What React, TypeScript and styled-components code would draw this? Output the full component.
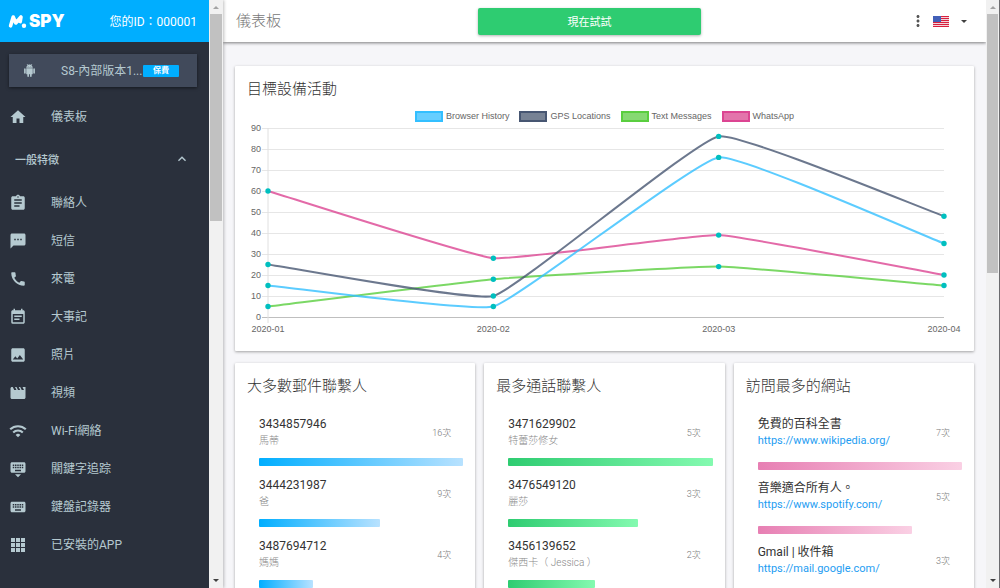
import React, { useEffect, useRef, useState } from "react";
import styled, { createGlobalStyle } from "styled-components";
import {
  MdAssignment,
  MdCall,
  MdEventNote,
  MdHome,
  MdImage,
  MdKeyboard,
  MdKeyboardArrowUp,
  MdKeyboardHide,
  MdMoreVert,
  MdMovie,
  MdTextsms,
} from "react-icons/md";

const GlobalStyle = createGlobalStyle`
  *, *::before, *::after { box-sizing: border-box; }
  body {
    margin: 0;
    font-family: Roboto, "Noto Sans CJK TC", sans-serif;
    font-size: 12px;
    color: #333;
    background: #f6f6f9;
  }
  h1, h2, p, ul { margin: 0; padding: 0; font-weight: 400; }
  ul { list-style: none; }
  a { text-decoration: none; color: inherit; }
  button { border: 0; font: inherit; cursor: pointer; }
`;

const Shell = styled.div`
  display: flex;
  height: 100vh;
  border-right: 1px solid #6b6b6e;
`;

const SidebarFrame = styled.aside`
  display: flex;
  flex: none;
  z-index: 2;
  box-shadow: 1px 0 3px rgba(0, 0, 0, 0.25);
`;

const Sidebar = styled.div`
  width: 209px;
  overflow: hidden;
  background: #2a303c;
  color: #b5c9d0;
`;

const Brand = styled.div`
  display: flex;
  align-items: center;
  justify-content: space-between;
  height: 42px;
  padding: 0 12px 2px 8px;
  background: #00aeff;
  color: #fff;
`;

const Logo = styled.a`
  display: flex;
  align-items: center;
  gap: 2px;
  padding-top: 2px;
  font: 900 17px/20px Inter, sans-serif;
`;

const DeviceButton = styled.button`
  display: flex;
  align-items: center;
  width: calc(100% - 21px);
  height: 33px;
  margin: 12px 12px 10px 9px;
  padding: 0 18px 0 14px;
  background: #414a5b;
  color: #b5c9d0;
  box-shadow: 0 1px 3px rgba(0, 0, 0, 0.5);
`;

const DeviceName = styled.span`
  flex: 1;
  margin-left: 25px;
  padding-bottom: 2px;
  text-align: left;
  white-space: nowrap;
`;

const Tag = styled.span`
  width: 36px;
  border-radius: 1px;
  background: #00aeff;
  color: #fff;
  font-size: 8px;
  font-weight: 700;
  line-height: 12px;
  text-align: center;
`;

const NavItem = styled.a`
  display: flex;
  align-items: center;
  gap: 24px;
  height: 38px;
  padding: 0 0 2px 9px;

  svg {
    margin-top: 3px;
  }
`;

const GroupToggle = styled.button`
  display: flex;
  align-items: center;
  justify-content: space-between;
  width: 100%;
  height: 48px;
  padding: 0 19px 0 15px;
  background: none;
  color: inherit;
  font-size: 11px;
  font-weight: 500;
`;

const Track = styled.div<{ $width: number }>`
  display: flex;
  flex: none;
  flex-direction: column;
  align-items: center;
  width: ${(p) => p.$width}px;
  padding: 6px 0;
  background: #f1f1f1;
`;

const Thumb = styled.div<{ $share: number }>`
  width: calc(100% - 2px);
  height: ${(p) => p.$share}%;
  margin: 5px 0 auto;
  background: #c1c1c1;
`;

const Arrow = styled.div<{ $up?: boolean }>`
  border: 3px solid transparent;
  border-top-width: ${(p) => (p.$up ? 0 : 3)}px;
  border-bottom-width: ${(p) => (p.$up ? 3 : 0)}px;
  border-top-color: #404040;
  border-bottom-color: #a3a3a3;
`;

const Page = styled.div`
  display: flex;
  flex: 1;
  flex-direction: column;
  min-width: 0;
  overflow: hidden;
`;

const TopBar = styled.header`
  display: grid;
  grid-template-columns: 9fr 223px 10fr;
  align-items: center;
  flex: none;
  height: 42px;
  padding: 0 16px 0 13px;
  background: #fff;
  box-shadow: 0 1px 3px rgba(0, 0, 0, 0.5);
`;

const PageTitle = styled.h1`
  padding-bottom: 1px;
  color: #777;
  font-size: 15px;
  font-weight: 300;
  line-height: 20px;
`;

const TryButton = styled.button`
  height: 27px;
  padding-bottom: 2px;
  border-radius: 2px;
  background: #2ecc71;
  color: #fff;
  font-size: 11px;
  box-shadow: 0 1px 3px rgba(0, 0, 0, 0.3);
`;

const TopActions = styled.div`
  display: flex;
  align-items: center;
  justify-content: flex-end;
`;

const IconButton = styled.button`
  display: flex;
  align-items: center;
  gap: 12px;
  padding: 0 3px;
  background: none;
  color: #555;
`;

const Content = styled.main`
  flex: 1;
  min-height: 0;
  overflow-y: auto;
  scrollbar-width: none;
  padding: 24px 12px 12px;
`;

const Card = styled.section`
  padding: 13px 12px;
  border-radius: 1px;
  background: #fff;
  box-shadow: 0 1px 3px rgba(0, 0, 0, 0.35);
`;

const CardTitle = styled.h2`
  color: #333;
  font-size: 15px;
  font-weight: 300;
  line-height: 20px;
`;

const Legend = styled.ul`
  display: flex;
  justify-content: center;
  gap: 10px;
  margin-top: 11px;
  color: #666;
  font: 9px/12px "Liberation Sans", Arial, sans-serif;
`;

const LegendItem = styled.li`
  display: flex;
  align-items: center;
  gap: 3px;
`;

const Swatch = styled.span<{ $fill: string; $line: string }>`
  width: 28px;
  height: 11px;
  border: 2px solid ${(p) => p.$line};
  background: ${(p) => p.$fill};
`;

const ChartSvg = styled.svg`
  display: block;
  width: 100%;
  height: 216px;
  font: 9px "Liberation Sans", Arial, sans-serif;
  fill: #666;
`;

const Columns = styled.div`
  display: grid;
  grid-template-columns: repeat(3, minmax(0, 1fr));
  gap: 9px;
  margin-top: 12px;
`;

const RankList = styled.ul`
  margin-top: 17px;
  padding-left: 12px;
`;

const RankItem = styled.li<{ $tall?: boolean }>`
  height: ${(p) => (p.$tall ? 64 : 61)}px;
`;

const RankRow = styled.div<{ $tall?: boolean }>`
  display: flex;
  align-items: center;
  justify-content: space-between;
  height: ${(p) => (p.$tall ? 49 : 45)}px;
  padding: ${(p) => (p.$tall ? "0 12px 11px 0" : "2px 12px 9px 0")};
`;

const RankName = styled.p`
  line-height: 17px;
  white-space: nowrap;
`;

const RankDetail = styled.p`
  color: #888;
  font-size: 10px;
  font-weight: 300;
  line-height: 15px;
  white-space: nowrap;
`;

const RankLink = styled.a`
  display: block;
  color: #1e9df2;
  font-size: 11px;
  line-height: 16px;
`;

const RankCount = styled.span`
  color: #777;
  font-size: 9px;
  font-weight: 300;
`;

const Bar = styled.div<{ $tone: string }>`
  height: 8px;
  border-radius: 1px;
  background: linear-gradient(to right, ${(p) => p.$tone});
`;

const WifiIcon = () => (
  <svg width="18" height="18" viewBox="0 0 24 24" fill="none" stroke="currentColor" strokeWidth="2.8">
    <path d="M1.6 9.8a15 15 0 0 1 20.8 0" />
    <path d="M5.6 14a9.2 9.2 0 0 1 12.8 0" />
    <path d="M8.8 17.2a4.6 4.6 0 0 1 6.4 0L12 20.4z" fill="currentColor" stroke="none" />
  </svg>
);

const AppsIcon = () => (
  <svg width="18" height="18" viewBox="0 0 18 18" fill="currentColor">
    {[2, 7, 12].map((y) =>
      [2, 7, 12].map((x) => <rect key={`${x}-${y}`} x={x} y={y} width="4" height="4" />)
    )}
  </svg>
);

const AndroidIcon = () => (
  <svg width="13" height="13" viewBox="0 0 24 24" fill="currentColor">
    <path d="M6 18c0 .55.45 1 1 1h1v3.5c0 .83.67 1.5 1.5 1.5s1.5-.67 1.5-1.5V19h2v3.5c0 .83.67 1.5 1.5 1.5s1.5-.67 1.5-1.5V19h1c.55 0 1-.45 1-1V8H6v10zM3.5 8C2.67 8 2 8.67 2 9.5v7c0 .83.67 1.5 1.5 1.5S5 17.33 5 16.5v-7C5 8.67 4.33 8 3.5 8zm17 0c-.83 0-1.5.67-1.5 1.5v7c0 .83.67 1.5 1.5 1.5s1.5-.67 1.5-1.5v-7c0-.83-.67-1.5-1.5-1.5zm-4.97-5.84l1.3-1.3c.2-.2.2-.51 0-.71-.2-.2-.51-.2-.71 0l-1.48 1.48C13.85 1.23 12.95 1 12 1c-.96 0-1.86.23-2.66.63L7.85.15c-.2-.2-.51-.2-.71 0-.2.2-.2.51 0 .71l1.31 1.31C6.97 3.26 6 5.01 6 7h12c0-1.99-.97-3.75-2.47-4.84zM10 5H9V4h1v1zm5 0h-1V4h1v1z" />
  </svg>
);

const LogoMark = () => (
  <svg width="19" height="16" viewBox="0 0 19 16" fill="none" stroke="#fff" strokeLinecap="round" strokeLinejoin="round">
    <path d="M2.6 12.8 5.2 4l2.6 6L13 4l-.8 4.6" strokeWidth="3.6" />
    <circle cx="16" cy="12.8" r="2.2" fill="#fff" stroke="none" />
  </svg>
);

const FlagIcon = () => (
  <svg width="16" height="11" viewBox="0 0 16 11">
    <rect width="16" height="11" fill="#f3d3da" />
    {[0, 2, 4, 6, 8, 10].map((y) => (
      <rect key={y} y={y} width="16" height="1" fill="#d8203e" />
    ))}
    <rect width="8" height="6" fill="#4260b8" />
  </svg>
);

const navItems = [
  { label: "聯絡人", icon: <MdAssignment size={18} /> },
  { label: "短信", icon: <MdTextsms size={18} /> },
  { label: "來電", icon: <MdCall size={18} /> },
  { label: "大事記", icon: <MdEventNote size={18} /> },
  { label: "照片", icon: <MdImage size={18} /> },
  { label: "視頻", icon: <MdMovie size={18} /> },
  { label: "Wi-Fi網絡", icon: <WifiIcon /> },
  { label: "關鍵字追踪", icon: <MdKeyboardHide size={18} /> },
  { label: "鍵盤記錄器", icon: <MdKeyboard size={18} /> },
  { label: "已安裝的APP", icon: <AppsIcon /> },
];

const months = ["2020-01", "2020-02", "2020-03", "2020-04"];

const series = [
  { name: "Browser History", line: "#33bfff", fill: "#66ceff", values: [15, 5, 76, 35] },
  { name: "GPS Locations", line: "#475672", fill: "#778294", values: [25, 10, 86, 48] },
  { name: "Text Messages", line: "#5ace3f", fill: "#86d972", values: [5, 18, 24, 15] },
  { name: "WhatsApp", line: "#dc4592", fill: "#e374ab", values: [60, 28, 39, 20] },
];

interface Rank {
  name: string;
  detail: string;
  count: number;
  width: number;
}

const mailContacts: Rank[] = [
  { name: "3434857946", detail: "馬蒂", count: 16, width: 100 },
  { name: "3444231987", detail: "爸", count: 9, width: 59.4 },
  { name: "3487694712", detail: "媽媽", count: 4, width: 26.4 },
];

const callContacts: Rank[] = [
  { name: "3471629902", detail: "特蕾莎修女", count: 5, width: 100 },
  { name: "3476549120", detail: "麗莎", count: 3, width: 63.4 },
  { name: "3456139652", detail: "傑西卡（ Jessica ）", count: 2, width: 42.3 },
];

const sites: Rank[] = [
  { name: "免費的百科全書", detail: "https://www.wikipedia.org/", count: 7, width: 100 },
  { name: "音樂適合所有人。", detail: "https://www.spotify.com/", count: 5, width: 75.5 },
  { name: "Gmail | 收件箱", detail: "https://mail.google.com/", count: 3, width: 45 },
];

type Point = { x: number; y: number };

/* Bezier path whose control points follow the slope between each point's neighbours. */
function splinePath(points: Point[], tension: number) {
  const controls = points.map((cur, i) => {
    const prev = points[i - 1] ?? cur;
    const next = points[i + 1] ?? cur;
    const before = Math.hypot(cur.x - prev.x, cur.y - prev.y);
    const after = Math.hypot(next.x - cur.x, next.y - cur.y);
    const a = (tension * before) / (before + after);
    const b = (tension * after) / (before + after);
    const dx = next.x - prev.x;
    const dy = next.y - prev.y;
    return { in: [cur.x - a * dx, cur.y - a * dy], out: [cur.x + b * dx, cur.y + b * dy] };
  });
  return points
    .map((p, i) => (i === 0 ? `M${p.x},${p.y}` : `C${controls[i - 1].out} ${controls[i].in} ${p.x},${p.y}`))
    .join(" ");
}

function ActivityChart() {
  const ref = useRef<SVGSVGElement>(null);
  const [width, setWidth] = useState(715);

  useEffect(() => {
    const node = ref.current;
    if (!node) return;
    const measure = () => setWidth(node.getBoundingClientRect().width);
    measure();
    const observer = new ResizeObserver(measure);
    observer.observe(node);
    return () => observer.disconnect();
  }, []);

  const left = 21;
  const right = width - 18;
  const top = 6;
  const bottom = 195;
  const toX = (i: number) => left + ((right - left) * i) / (months.length - 1);
  const toY = (v: number) => bottom - ((bottom - top) * v) / 90;

  return (
    <ChartSvg ref={ref} role="img" aria-label="目標設備活動">
      {[0, 10, 20, 30, 40, 50, 60, 70, 80, 90].map((v) => (
        <g key={v}>
          <line x1={left - 6} x2={right} y1={toY(v) + 0.5} y2={toY(v) + 0.5} stroke={v ? "#e6e6e6" : "#bfbfbf"} />
          <text x={left - 7} y={toY(v) + 3} textAnchor="end">{v}</text>
        </g>
      ))}
      <line x1={left} x2={left} y1={top} y2={bottom + 6} stroke="#e0e0e0" />
      {months.map((m, i) => (
        <text key={m} x={toX(i)} y={bottom + 15} textAnchor="middle">{m}</text>
      ))}
      {[...series].reverse().map((s) => (
        <path
          key={s.name}
          d={splinePath(s.values.map((v, i) => ({ x: toX(i), y: toY(v) })), 0.1)}
          fill="none"
          stroke={s.line}
          strokeOpacity="0.8"
          strokeWidth="2"
        />
      ))}
      {series.map((s) =>
        s.values.map((v, i) => <circle key={s.name + i} cx={toX(i)} cy={toY(v)} r="2.7" fill="#00bfbf" />)
      )}
    </ChartSvg>
  );
}

function RankCard({ title, items, tone, links }: { title: string; items: Rank[]; tone: string; links?: boolean }) {
  return (
    <Card>
      <CardTitle>{title}</CardTitle>
      <RankList>
        {items.map((item) => (
          <RankItem key={item.name} $tall={links}>
            <RankRow $tall={links}>
              <div>
                <RankName>{item.name}</RankName>
                {links ? (
                  <RankLink href={item.detail}>{item.detail}</RankLink>
                ) : (
                  <RankDetail>{item.detail}</RankDetail>
                )}
              </div>
              <RankCount>{item.count}次</RankCount>
            </RankRow>
            <Bar $tone={tone} style={{ width: `${item.width}%` }} />
          </RankItem>
        ))}
      </RankList>
    </Card>
  );
}

function ScrollTrack({ share, width }: { share: number; width: number }) {
  return (
    <Track $width={width} aria-hidden="true">
      <Arrow $up />
      <Thumb $share={share} />
      <Arrow />
    </Track>
  );
}

export default function App() {
  return (
    <>
      <GlobalStyle />
      <Shell>
        <SidebarFrame>
          <Sidebar>
            <Brand>
              <Logo href="#" aria-label="mSPY">
                <LogoMark />
                SPY
              </Logo>
              <span>您的ID：000001</span>
            </Brand>
            <DeviceButton type="button">
              <AndroidIcon />
              <DeviceName>S8-內部版本1...</DeviceName>
              <Tag>保費</Tag>
            </DeviceButton>
            <nav>
              <NavItem href="#">
                <MdHome size={18} />
                儀表板
              </NavItem>
              <GroupToggle type="button" aria-expanded="true">
                一般特徵
                <MdKeyboardArrowUp size={16} />
              </GroupToggle>
              {navItems.map((item) => (
                <NavItem key={item.label} href="#">
                  {item.icon}
                  {item.label}
                </NavItem>
              ))}
            </nav>
          </Sidebar>
          <ScrollTrack share={36} width={14} />
        </SidebarFrame>
        <Page>
          <TopBar>
            <PageTitle>儀表板</PageTitle>
            <TryButton type="button">現在試試</TryButton>
            <TopActions>
              <IconButton type="button" aria-label="更多">
                <MdMoreVert size={18} />
              </IconButton>
              <IconButton type="button" aria-label="語言">
                <FlagIcon />
                <Arrow />
              </IconButton>
            </TopActions>
          </TopBar>
          <Content>
            <Card>
              <CardTitle>目標設備活動</CardTitle>
              <Legend>
                {series.map((s) => (
                  <LegendItem key={s.name}>
                    <Swatch $fill={s.fill} $line={s.line} />
                    {s.name}
                  </LegendItem>
                ))}
              </Legend>
              <ActivityChart />
            </Card>
            <Columns>
              <RankCard title="大多數郵件聯繫人" items={mailContacts} tone="#00aeff, #b8e2ff" />
              <RankCard title="最多通話聯繫人" items={callContacts} tone="#2ecc71, #84fab0" />
              <RankCard title="訪問最多的網站" items={sites} tone="#e77fb3, #fad0e4" links />
            </Columns>
          </Content>
        </Page>
        <ScrollTrack share={45} width={13} />
      </Shell>
    </>
  );
}
